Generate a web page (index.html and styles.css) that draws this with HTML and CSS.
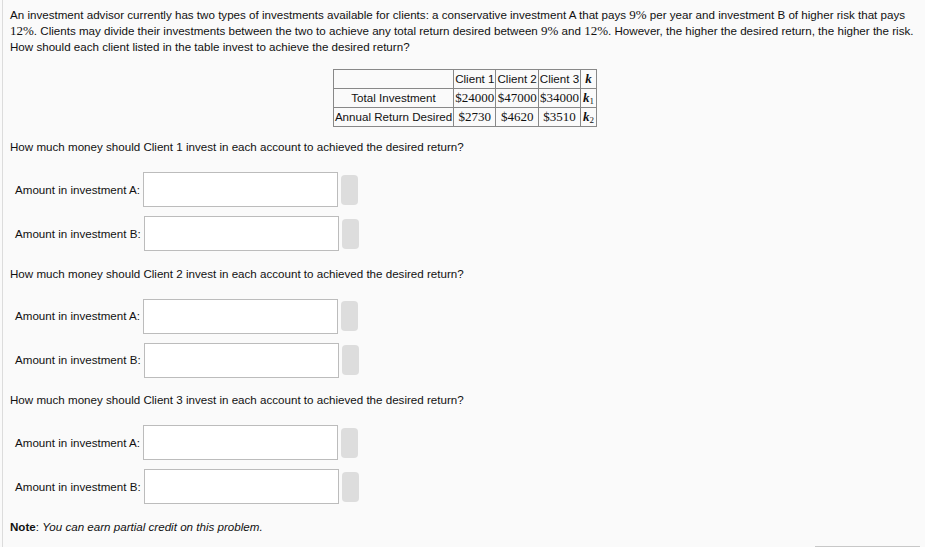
FILE: index.html
```html
<!DOCTYPE html>
<html>
<head>
<meta charset="utf-8">
<link rel="stylesheet" href="styles.css">
</head>
<body>
<div class="problem">
  <p class="intro">An investment advisor currently has two types of investments available for clients: a conservative investment A that pays <span class="m">9%</span> per year and investment B of higher risk that pays <span class="m">12%</span>. Clients may divide their investments between the two to achieve any total return desired between <span class="m">9%</span> and <span class="m">12%</span>. However, the higher the desired return, the higher the risk. How should each client listed in the table invest to achieve the desired return?</p>

  <table class="data">
    <tr><td></td><td>Client 1</td><td>Client 2</td><td>Client 3</td><td class="k">k</td></tr>
    <tr><td>Total Investment</td><td class="m">$24000</td><td class="m">$47000</td><td class="m">$34000</td><td class="k">k<sub>1</sub></td></tr>
    <tr><td>Annual Return Desired</td><td class="m">$2730</td><td class="m">$4620</td><td class="m">$3510</td><td class="k">k<sub>2</sub></td></tr>
  </table>

  <section class="part">
    <p class="q">How much money should Client 1 invest in each account to achieved the desired return?</p>
    <div class="row"><span class="lbl">Amount in investment A:</span><span class="box"></span><span class="btn"></span></div>
    <div class="row"><span class="lbl">Amount in investment B:</span><span class="box"></span><span class="btn"></span></div>
  </section>

  <section class="part">
    <p class="q">How much money should Client 2 invest in each account to achieved the desired return?</p>
    <div class="row"><span class="lbl">Amount in investment A:</span><span class="box"></span><span class="btn"></span></div>
    <div class="row"><span class="lbl">Amount in investment B:</span><span class="box"></span><span class="btn"></span></div>
  </section>

  <section class="part">
    <p class="q">How much money should Client 3 invest in each account to achieved the desired return?</p>
    <div class="row"><span class="lbl">Amount in investment A:</span><span class="box"></span><span class="btn"></span></div>
    <div class="row"><span class="lbl">Amount in investment B:</span><span class="box"></span><span class="btn"></span></div>
  </section>

  <p class="note"><b>Note</b>: <i>You can earn partial credit on this problem.</i></p>

  <div class="actions"><span class="submit"></span></div>
</div>
</body>
</html>
```

FILE: styles.css
```css
html, body {
  margin: 0;
  padding: 0;
  background: #fafafa;
}
body {
  padding-left: 2px;
  font-family: "Liberation Sans", Arial, sans-serif;
  font-size: 11.6px;
  line-height: 16px;
  color: #111;
}
.problem {
  border-left: 1px solid #dcdcdc;
  padding: 7px 5px 0 7px;
  min-height: 540px;
}
p { margin: 0; }
.m {
  font-family: "Liberation Serif", "Times New Roman", serif;
  font-size: 13px;
}
.data {
  border-collapse: collapse;
  margin: 14px auto 12px;
  line-height: 16px;
  font-size: 11.6px;
}
.data td {
  border: 1px solid #888;
  padding: 1px 1px;
  text-align: center;
  white-space: nowrap;
}
.data td.k {
  font-family: "Liberation Serif", "Times New Roman", serif;
  font-style: italic;
  font-weight: bold;
  font-size: 13px;
  padding: 1px 2px;
}
.data td.k sub {
  font-style: normal;
  font-weight: normal;
  font-size: 9px;
  line-height: 0;
  vertical-align: -2px;
}
.q { margin-bottom: 17px; }
.part { margin-bottom: 14.5px; }
.row {
  display: flex;
  align-items: center;
  gap: 3px;
  padding-left: 5px;
}
.row + .row { margin-top: 9px; }
.box {
  width: 193px;
  height: 33px;
  background: #fff;
  border: 1px solid #bcbcbc;
}
.btn {
  width: 17px;
  height: 30px;
  background: #dddddd;
  border-radius: 4px;
}
.note b { font-weight: bold; }
.actions {
  display: flex;
  justify-content: flex-end;
  margin-top: 11px;
}
.submit {
  width: 105px;
  height: 20px;
  border-top: 2px solid #c8c8c8;
  background: #f7f7f7;
}
```
